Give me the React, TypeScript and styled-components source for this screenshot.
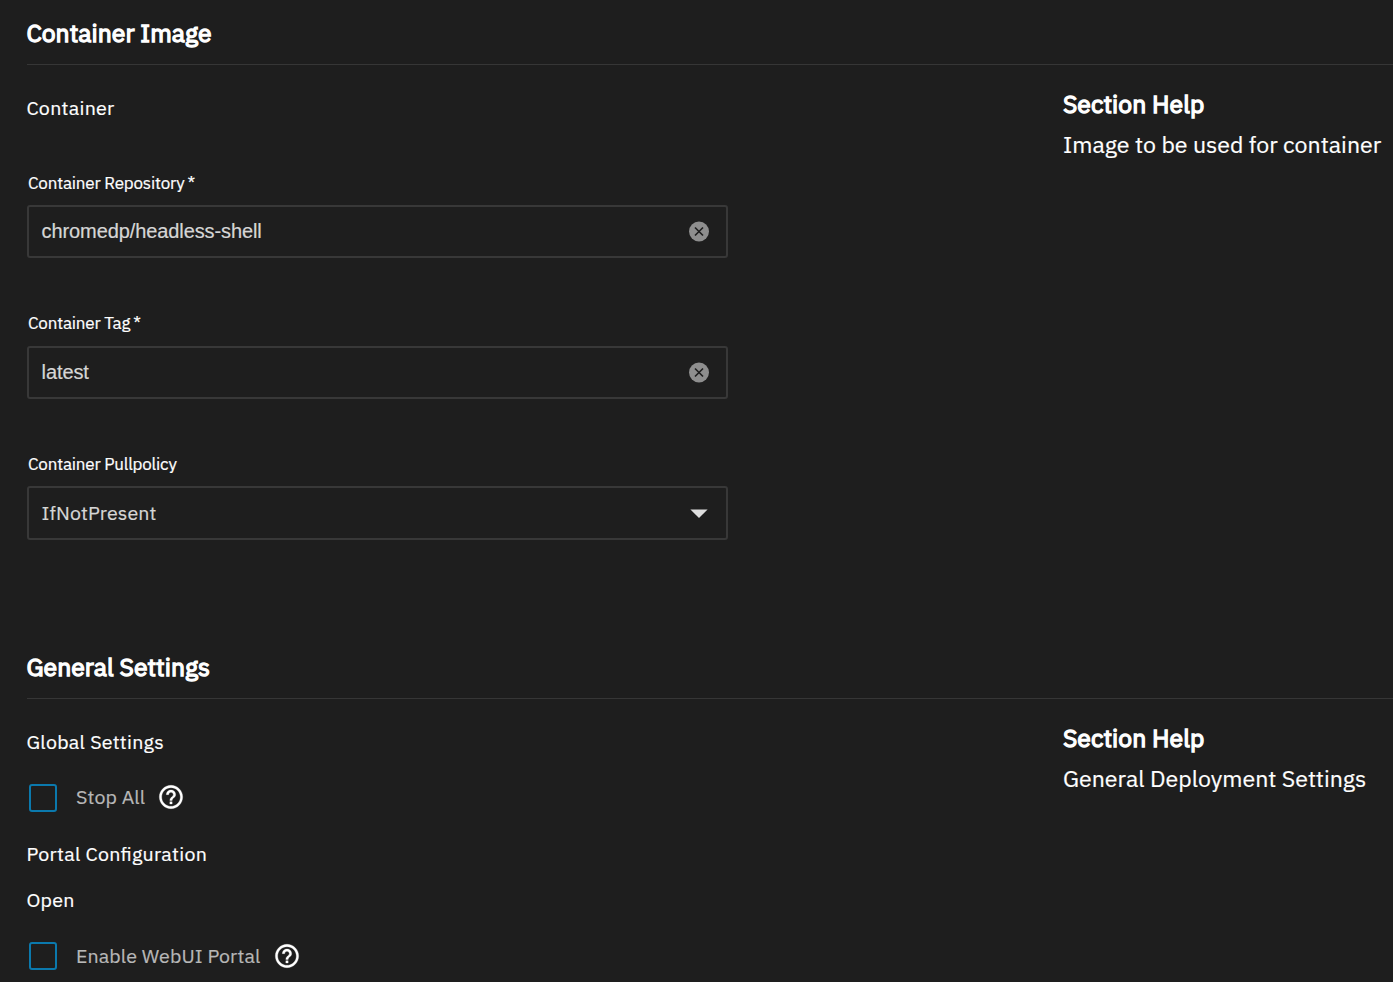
import React from "react";
import styled, { createGlobalStyle } from "styled-components";
import { MdHelpOutline } from "react-icons/md";

const GlobalStyle = createGlobalStyle`
  * { box-sizing: border-box; }
  html, body { margin: 0; background: #1e1e1e; overflow: hidden; }
  body {
    font-family: "IBM Plex Sans", "Noto Sans", sans-serif;
    color: #fff;
    -webkit-text-stroke-width: 0.2px;
  }
`;

const Page = styled.main`
  height: 982px;
  overflow: hidden;
  padding-left: 27px;
`;

const Section = styled.section`
  height: 634px;
`;

const SectionTitle = styled.h2`
  margin: 0;
  height: 65px;
  padding-top: 13px;
  border-bottom: 1px solid #363636;
  font-size: 24.7px;
  font-weight: 400;
  line-height: 40px;
  letter-spacing: 0.03px;
  text-indent: -0.6px;
  -webkit-text-stroke: 1.3px #fff;
  white-space: nowrap;
`;

const SectionBody = styled.div`
  display: grid;
  grid-template-columns: 1036px 1fr;
`;

const Fields = styled.div`
  padding-top: 29px;
`;

const GroupLabel = styled.div`
  height: 28px;
  font-size: 19.6px;
  line-height: 28px;
  letter-spacing: 0.29px;
  font-feature-settings: "liga" 1;
  text-indent: -0.6px;
  white-space: nowrap;
`;

const FieldList = styled.div`
  padding-top: 49px;
`;

const Field = styled.div<{ $height: number }>`
  width: 701px;
  height: ${(p) => p.$height}px;
`;

const FieldLabel = styled.label<{ $gap?: number }>`
  display: flex;
  gap: 3px;
  height: 24px;
  margin-bottom: ${(p) => p.$gap ?? 10}px;
  padding-left: 1px;
  font-size: 17px;
  line-height: 24px;
  letter-spacing: -0.2px;
  white-space: nowrap;
`;

const Control = styled.div<{ $height?: number }>`
  display: flex;
  align-items: center;
  justify-content: space-between;
  height: ${(p) => p.$height ?? 53}px;
  padding: 0 15px 0 13px;
  border: 2px solid #383838;
  border-radius: 3px;
  color: #d6d6d6;
`;

const InputValue = styled.span`
  padding-bottom: 1px;
  font-family: "Liberation Sans", Arial, sans-serif;
  font-size: 20px;
  line-height: 28px;
  letter-spacing: -0.1px;
  text-indent: -0.4px;
`;

const SelectValue = styled.span`
  font-size: 19.6px;
  line-height: 28px;
  letter-spacing: 0.1px;
  text-indent: -0.4px;
`;

const Help = styled.aside`
  padding-top: 19px;
  white-space: nowrap;
`;

const HelpTitle = styled.h3`
  margin: 0 0 1px;
  font-size: 24.7px;
  font-weight: 400;
  line-height: 40px;
  letter-spacing: 0.03px;
  -webkit-text-stroke: 1.3px #fff;
`;

const HelpText = styled.p`
  margin: 0;
  font-size: 23.12px;
  line-height: 38px;
`;

const CheckRow = styled.label`
  display: flex;
  align-items: center;
  height: 28px;
  margin: 28px 0 0 2px;
  color: #b8b8b8;
`;

const CheckBox = styled.span`
  width: 28px;
  height: 28px;
  margin-right: 19px;
  border: 2.5px solid #0b79ad;
  border-radius: 3px;
`;

const CheckText = styled.span<{ $lift?: number }>`
  margin-right: 12.2px;
  padding-bottom: ${(p) => p.$lift ?? 0}px;
  font-size: 19.6px;
  line-height: 28px;
  letter-spacing: 0.1px;
  white-space: nowrap;
`;

const HelpIcon = styled(MdHelpOutline)<{ $lift?: number }>`
  width: 28px;
  height: 28px;
  margin-bottom: ${(p) => p.$lift ?? 0}px;
  color: #fff;

  path:last-child {
    stroke: #fff;
    stroke-width: 0.25px;
  }
`;

const Spacer = styled.div<{ $h: number }>`
  height: ${(p) => p.$h}px;
`;

const ClearIcon = () => (
  <svg width="24" height="24" viewBox="0 0 24 24">
    <circle cx="12" cy="11.5" r="10" fill="#8e8e8e" />
    <path d="M8 7.5l8 8M16 7.5l-8 8" stroke="#1e1e1e" strokeWidth="1.6" />
  </svg>
);

const ArrowIcon = () => (
  <svg width="24" height="24" viewBox="0 0 24 24">
    <path d="M3.4 8.4h17.2L12 17z" fill="#dedede" />
  </svg>
);

export default function App() {
  return (
    <>
      <GlobalStyle />
      <Page>
        <Section>
          <SectionTitle>Container Image</SectionTitle>
          <SectionBody>
            <Fields>
              <GroupLabel>Container</GroupLabel>
              <FieldList>
                <Field $height={140}>
                  <FieldLabel>
                    <span>Container Repository</span>
                    <span>*</span>
                  </FieldLabel>
                  <Control>
                    <InputValue>chromedp/headless-shell</InputValue>
                    <ClearIcon />
                  </Control>
                </Field>
                <Field $height={141}>
                  <FieldLabel $gap={11}>
                    <span>Container Tag</span>
                    <span>*</span>
                  </FieldLabel>
                  <Control>
                    <InputValue>latest</InputValue>
                    <ClearIcon />
                  </Control>
                </Field>
                <Field $height={141}>
                  <FieldLabel>
                    <span>Container Pullpolicy</span>
                  </FieldLabel>
                  <Control $height={54}>
                    <SelectValue>IfNotPresent</SelectValue>
                    <ArrowIcon />
                  </Control>
                </Field>
              </FieldList>
            </Fields>
            <Help>
              <HelpTitle>Section Help</HelpTitle>
              <HelpText>Image to be used for container</HelpText>
            </Help>
          </SectionBody>
        </Section>
        <Section>
          <SectionTitle>General Settings</SectionTitle>
          <SectionBody>
            <Fields>
              <GroupLabel>Global Settings</GroupLabel>
              <CheckRow>
                <CheckBox />
                <CheckText $lift={2}>Stop All</CheckText>
                <HelpIcon $lift={2} />
              </CheckRow>
              <Spacer $h={28} />
              <GroupLabel>Portal Configuration</GroupLabel>
              <Spacer $h={18} />
              <GroupLabel>Open</GroupLabel>
              <CheckRow>
                <CheckBox />
                <CheckText>Enable WebUI Portal</CheckText>
                <HelpIcon />
              </CheckRow>
            </Fields>
            <Help>
              <HelpTitle>Section Help</HelpTitle>
              <HelpText>General Deployment Settings</HelpText>
            </Help>
          </SectionBody>
        </Section>
      </Page>
    </>
  );
}
